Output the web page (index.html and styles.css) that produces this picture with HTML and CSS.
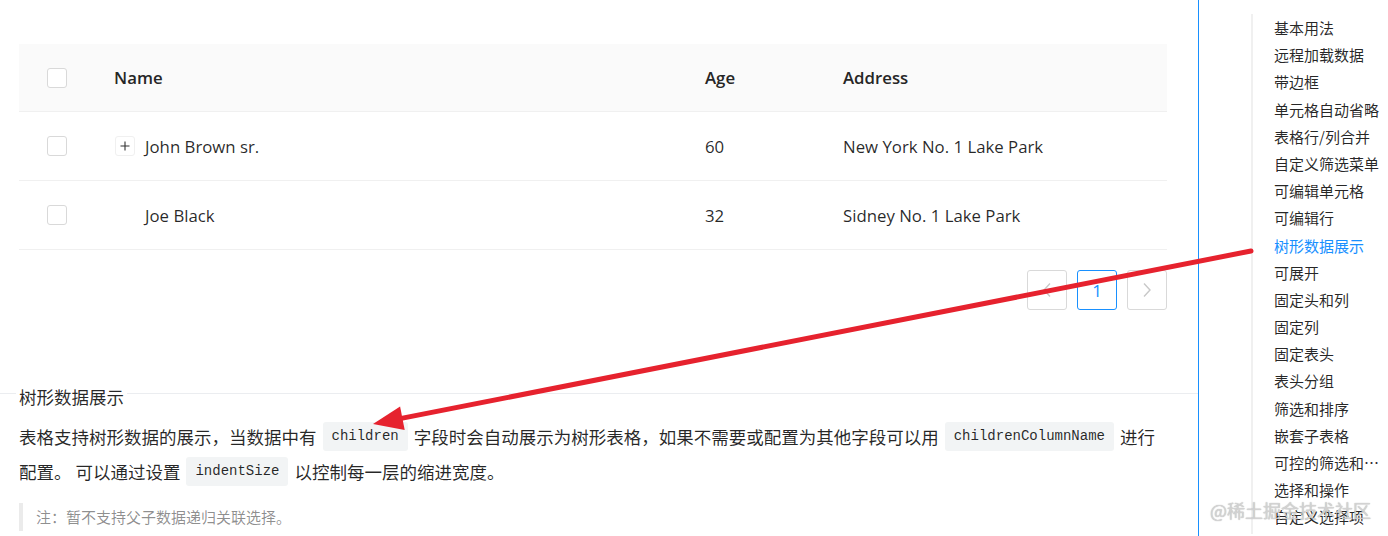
FILE: index.html
```html
<!DOCTYPE html>
<html lang="zh-CN">
<head>
    <meta charset="UTF-8">
    <meta name="viewport" content="width=device-width, initial-scale=1.0">
    <title>Table 表格 - 树形数据展示</title>
    <link rel="stylesheet" href="styles.css">
</head>
<body>
    <div class="page">
        <main class="content">
            <section class="demo">
                <div class="table">
                    <div class="row head">
                        <div class="cell sel"><span class="checkbox"></span></div>
                        <div class="cell">Name</div>
                        <div class="cell">Age</div>
                        <div class="cell">Address</div>
                    </div>
                    <div class="row">
                        <div class="cell sel"><span class="checkbox"></span></div>
                        <div class="cell name">
                            <button class="expand" type="button">
                                <svg width="10" height="10" viewBox="0 0 10 10"><path d="M5 0.5v9M0.5 5h9" stroke="#333" stroke-width="1.1" fill="none"/></svg>
                            </button>
                            John Brown sr.
                        </div>
                        <div class="cell">60</div>
                        <div class="cell">New York No. 1 Lake Park</div>
                    </div>
                    <div class="row">
                        <div class="cell sel"><span class="checkbox"></span></div>
                        <div class="cell name"><span class="expand-space"></span>Joe Black</div>
                        <div class="cell">32</div>
                        <div class="cell">Sidney No. 1 Lake Park</div>
                    </div>
                </div>

                <ul class="pagination">
                    <li class="page-item disabled">
                        <svg width="10" height="16" viewBox="0 0 10 16"><path d="M8 1.5L2 8l6 6.5" stroke="#c8c8c8" stroke-width="1.4" fill="none"/></svg>
                    </li>
                    <li class="page-item active">1</li>
                    <li class="page-item disabled">
                        <svg width="10" height="16" viewBox="0 0 10 16"><path d="M2 1.5L8 8l-6 6.5" stroke="#c8c8c8" stroke-width="1.4" fill="none"/></svg>
                    </li>
                </ul>
            </section>

            <section class="meta">
                <div class="meta-title">树形数据展示</div>
                <p>表格支持树形数据的展示，当数据中有<code>children</code>字段时会自动展示为树形表格，如果不需要或配置为其他字段可以用<code>childrenColumnName</code>进行配置。 可以通过设置<code>indentSize</code>以控制每一层的缩进宽度。</p>
                <blockquote>注：暂不支持父子数据递归关联选择。</blockquote>
            </section>
        </main>

        <nav class="anchor">
            <ul>
                <li>基本用法</li>
                <li>远程加载数据</li>
                <li>带边框</li>
                <li>单元格自动省略</li>
                <li>表格行/列合并</li>
                <li>自定义筛选菜单</li>
                <li>可编辑单元格</li>
                <li>可编辑行</li>
                <li class="active">树形数据展示</li>
                <li>可展开</li>
                <li>固定头和列</li>
                <li>固定列</li>
                <li>固定表头</li>
                <li>表头分组</li>
                <li>筛选和排序</li>
                <li>嵌套子表格</li>
                <li>可控的筛选和排序</li>
                <li>选择和操作</li>
                <li>自定义选择项</li>
            </ul>
        </nav>
    </div>

    <svg class="annotation" width="1388" height="536" viewBox="0 0 1388 536">
        <line x1="1251" y1="251" x2="400" y2="418.6" stroke="#e6222e" stroke-width="5" stroke-linecap="round"/>
        <polygon points="373,424 404.7,430 400.1,406.4" fill="#e6222e"/>
    </svg>

    <div class="watermark">@稀土掘金技术社区</div>
</body>
</html>
```

FILE: styles.css
```css
* {
    margin: 0;
    padding: 0;
    box-sizing: border-box;
}

body {
    font-family: "Open Sans", "Noto Sans CJK SC", sans-serif;
    font-size: 16.8px;
    color: rgba(0, 0, 0, 0.85);
    background-color: white;
    width: 1388px;
    height: 536px;
    overflow: hidden;
    position: relative;
}

.page {
    display: flex;
    height: 536px;
}

.content {
    width: 1199px;
    border-right: 1px solid #1890ff;
    flex-shrink: 0;
}

/* demo table */

.demo {
    padding: 44px 0 0 19px;
    width: 1167px;
}

.table {
    width: 1148px;
}

.row {
    display: grid;
    grid-template-columns: 75px 591px 138px 344px;
    height: 69px;
    border-bottom: 1px solid #f0f0f0;
}

.row.head {
    height: 68px;
    background-color: #fafafa;
    color: #262626;
    font-weight: 600;
}

.cell {
    display: flex;
    align-items: center;
    padding: 0 20px;
}

.cell.sel {
    justify-content: center;
    padding: 0;
}

.checkbox {
    width: 20px;
    height: 20px;
    border: 1px solid #d9d9d9;
    border-radius: 3px;
    background-color: white;
}

.expand {
    width: 20px;
    height: 20px;
    margin: 0 10px 0 1px;
    border: 1px solid #f0f0f0;
    border-radius: 3px;
    background-color: white;
    display: inline-flex;
    align-items: center;
    justify-content: center;
}

.expand-space {
    display: inline-block;
    width: 31px;
}

.pagination {
    list-style: none;
    display: flex;
    justify-content: flex-end;
    gap: 10px;
    margin-top: 20px;
    width: 1148px;
}

.page-item {
    width: 40px;
    height: 40px;
    border: 1px solid #d9d9d9;
    border-radius: 3px;
    display: flex;
    align-items: center;
    justify-content: center;
    color: #1890ff;
    font-size: 17px;
}

.page-item.active {
    border-color: #1890ff;
}

/* demo description */

.meta {
    margin-top: 83px;
    border-top: 1px solid #ebedf0;
    padding: 0 19px;
}

.meta-title {
    display: inline-block;
    margin: -9px 0 0 -3px;
    padding: 0 3px;
    background-color: white;
    font-family: "Noto Sans CJK SC", sans-serif;
    font-size: 17.5px;
    line-height: 24px;
    vertical-align: top;
}

.meta p {
    margin-top: 2px;
    font-family: "Noto Sans CJK SC", sans-serif;
    font-size: 17.5px;
    line-height: 35px;
    width: 1150px;
}

.meta code {
    display: inline-block;
    font-family: "Liberation Mono", monospace;
    font-size: 14px;
    line-height: 29px;
    height: 29px;
    vertical-align: top;
    margin: 3px 6px 0;
    padding: 0 9px;
    background-color: #f2f4f5;
    border-radius: 3px;
}

.meta blockquote {
    margin-top: 14px;
    border-left: 4px solid #ebebeb;
    padding-left: 13px;
    font-family: "Noto Sans CJK SC", sans-serif;
    font-size: 15px;
    line-height: 28px;
    color: rgba(0, 0, 0, 0.45);
}

/* anchor nav */

.anchor {
    flex: 1;
    padding: 16px 0 0 52px;
}

.anchor ul {
    list-style: none;
    border-left: 2px solid #f0f0f0;
    height: 520px;
}

.anchor li {
    position: relative;
    padding-left: 21px;
    height: 27.2px;
    line-height: 27.2px;
    margin-top: -2px;
    margin-bottom: 2px;
    font-family: "Noto Sans CJK SC", sans-serif;
    font-size: 15px;
    color: rgba(0, 0, 0, 0.85);
    white-space: nowrap;
    overflow: hidden;
    text-overflow: ellipsis;
    width: 131px;
}

.anchor li.active {
    color: #1890ff;
}

.anchor li.active::before {
    content: "";
    position: absolute;
    left: -2px;
    top: 1px;
    width: 2px;
    height: 26px;
    background-color: #1890ff;
}

/* screenshot overlays */

.annotation {
    position: absolute;
    left: 0;
    top: 0;
    pointer-events: none;
}

.watermark {
    position: absolute;
    left: 1210px;
    top: 497px;
    font-family: "Noto Sans CJK SC", sans-serif;
    font-size: 18px;
    line-height: 26px;
    color: rgba(215, 215, 215, 0.9);
    text-shadow: 0 0 1px rgba(0, 0, 0, 0.35);
    pointer-events: none;
}
```
